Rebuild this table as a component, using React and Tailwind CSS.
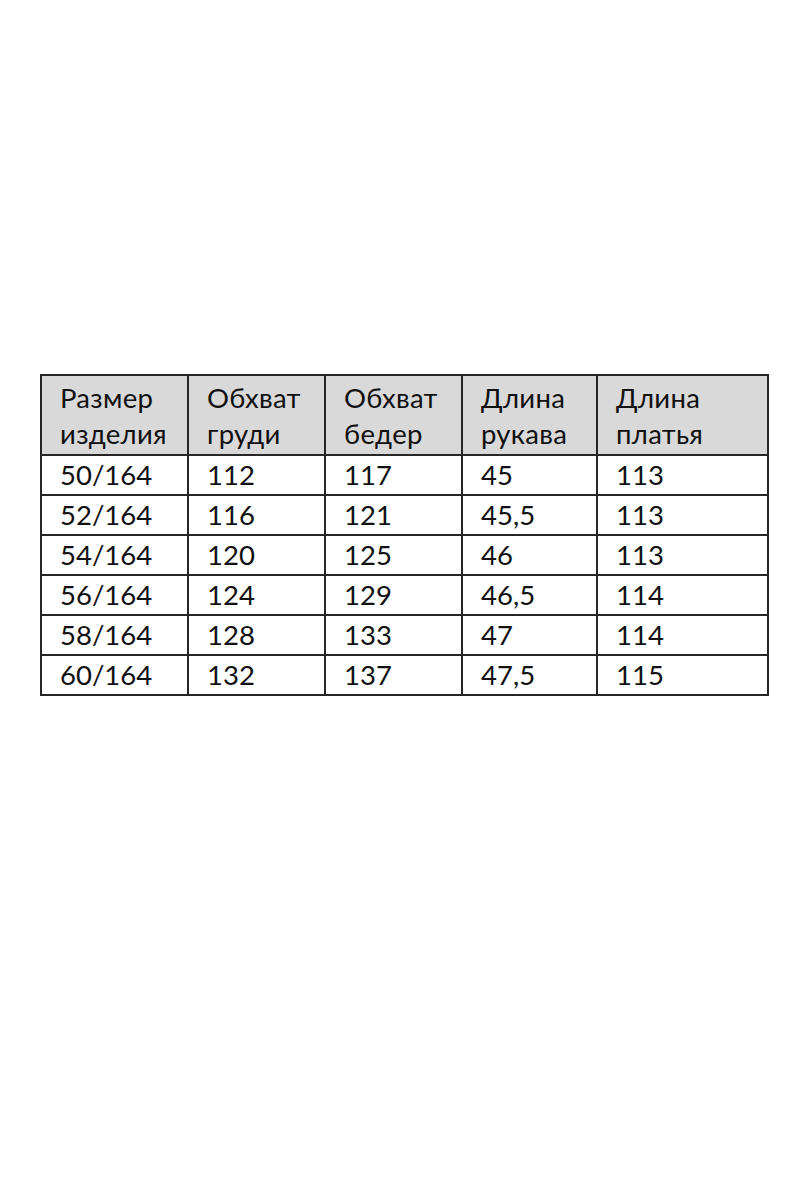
const HEAD = [
  ["Размер", "изделия"],
  ["Обхват", "груди"],
  ["Обхват", "бедер"],
  ["Длина", "рукава"],
  ["Длина", "платья"],
];

const ROWS = [
  ["50/164", "112", "117", "45", "113"],
  ["52/164", "116", "121", "45,5", "113"],
  ["54/164", "120", "125", "46", "113"],
  ["56/164", "124", "129", "46,5", "114"],
  ["58/164", "128", "133", "47", "114"],
  ["60/164", "132", "137", "47,5", "115"],
];

const App = () => {
  return (
    <div className="w-[800px] h-[1200px] bg-white pt-[374px] pl-[40px]" style={{ fontFamily: "Lato, 'Open Sans', sans-serif" }}>
      <table className="border-collapse text-[27.5px] text-[#111]">
        <colgroup>
          <col className="w-[147px]" />
          <col className="w-[137px]" />
          <col className="w-[137px]" />
          <col className="w-[135px]" />
          <col className="w-[171px]" />
        </colgroup>
        <thead>
          <tr className="h-[80px] bg-[#d9d9d9]">
            {HEAD.map((h, i) => (
              <th key={i} className="border-2 border-[#262626] pl-[18px] pt-[1px] text-left font-normal align-middle leading-[36px] tracking-[0.3px]">
                {h[0]}
                <br />
                {h[1]}
              </th>
            ))}
          </tr>
        </thead>
        <tbody>
          {ROWS.map((r) => (
            <tr key={r[0]} className="h-[40px]">
              {r.map((c, i) => (
                <td key={i} className="border-2 border-[#262626] pl-[18px] leading-[36px] align-middle">
                  {c}
                </td>
              ))}
            </tr>
          ))}
        </tbody>
      </table>
    </div>
  );
};

export default App;
